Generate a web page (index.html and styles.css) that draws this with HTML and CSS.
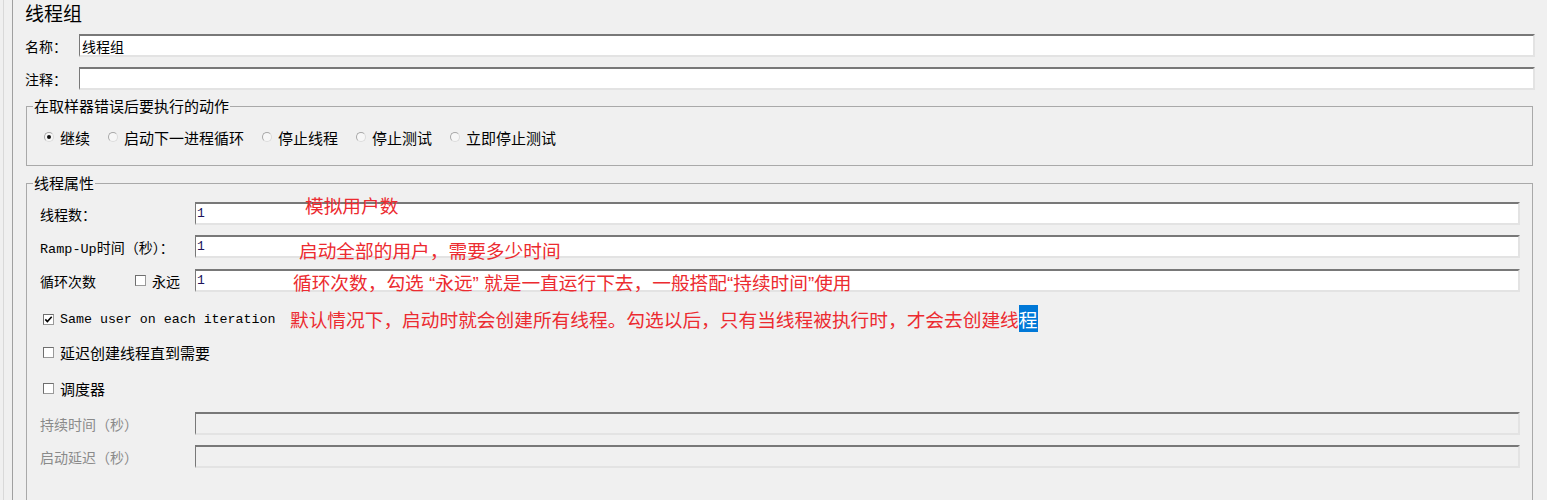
FILE: index.html
```html
<!DOCTYPE html>
<html lang="zh-CN">
<head>
<meta charset="utf-8">
<title>线程组</title>
<link rel="stylesheet" href="styles.css">
</head>
<body>
<div class="window">
  <div class="outer-line">
    <div class="pane">
      <h1 class="title">线程组</h1>
      <div class="field-row">
        <label class="field-label">名称：</label>
        <input class="text-input" value="线程组" readonly>
      </div>
      <div class="field-row row-comment">
        <label class="field-label">注释：</label>
        <input class="text-input" value="" readonly>
      </div>

      <fieldset class="group group-action">
        <legend>在取样器错误后要执行的动作</legend>
        <div class="radio-row">
          <span class="radio-item"><span class="radio checked"></span>继续</span>
          <span class="radio-item"><span class="radio"></span>启动下一进程循环</span>
          <span class="radio-item"><span class="radio"></span>停止线程</span>
          <span class="radio-item"><span class="radio"></span>停止测试</span>
          <span class="radio-item"><span class="radio"></span>立即停止测试</span>
        </div>
      </fieldset>

      <fieldset class="group group-thread">
        <legend>线程属性</legend>
        <div class="prop-row">
          <span class="prop-label">线程数：</span>
          <input class="text-input num-input" value="1" readonly>
          <span class="note note-1">模拟用户数</span>
        </div>
        <div class="prop-row row-2">
          <span class="prop-label"><span class="mono">Ramp-Up</span>时间（秒）：</span>
          <input class="text-input num-input" value="1" readonly>
          <span class="note note-2">启动全部的用户，需要多少时间</span>
        </div>
        <div class="prop-row row-3">
          <span class="prop-label loop-label"><span class="loop-text">循环次数</span><span class="checkbox"></span><span class="forever">永远</span></span>
          <input class="text-input num-input" value="1" readonly>
          <span class="note note-3">循环次数，勾选<span class="latin"> “</span>永远<span class="latin">” </span>就是一直运行下去，一般搭配<span class="latin">“</span>持续时间<span class="latin">”</span>使用</span>
        </div>

        <div class="check-row check-first">
          <span class="checkbox checked"><svg viewBox="0 0 9 9" width="9" height="9"><path d="M1.3 4.4 L3.4 6.6 L7.7 1.8" fill="none" stroke="#000" stroke-width="1.6"/></svg></span>
          <span class="mono mono-check">Same user on each iteration</span>
          <span class="note note-4">默认情况下，启动时就会创建所有线程。勾选以后，只有当线程被执行时，才会去创建线<span class="selected">程</span></span>
        </div>
        <div class="check-row check-second">
          <span class="checkbox"></span>
          <span>延迟创建线程直到需要</span>
        </div>
        <div class="check-row check-third">
          <span class="checkbox"></span>
          <span>调度器</span>
        </div>

        <div class="prop-row row-duration disabled">
          <span class="prop-label">持续时间（秒）</span>
          <input class="text-input num-input" value="" readonly>
        </div>
        <div class="prop-row row-delay disabled">
          <span class="prop-label">启动延迟（秒）</span>
          <input class="text-input num-input" value="" readonly>
        </div>
      </fieldset>
    </div>
  </div>
</div>
</body>
</html>
```

FILE: styles.css
```css
html, body {
  margin: 0;
  padding: 0;
}

body {
  background: #f0f0f0;
  font-family: "Noto Sans CJK SC", "Liberation Sans", sans-serif;
  color: #000;
}

.window {
  height: 500px;
  overflow: hidden;
  padding-left: 3px;
}

.outer-line {
  height: 100%;
  border-left: 1px solid #d9d9d9;
  padding-left: 8px;
}

.pane {
  height: 100%;
  border-left: 1px solid #a0a0a0;
  padding: 0 12px;
}

.title {
  margin: 0;
  font-size: 19px;
  font-weight: normal;
  line-height: 26px;
}

.field-row {
  display: flex;
  align-items: center;
  height: 23px;
  margin-top: 8px;
}

.row-comment {
  margin-top: 10px;
}

.field-label {
  width: 54px;
  font-size: 14px;
  flex: none;
}

.text-input {
  flex: 1;
  min-width: 0;
  height: 23px;
  box-sizing: border-box;
  margin: 0;
  padding: 0 2px;
  border-style: solid;
  border-width: 2px 2px 2px 1px;
  border-color: #787878 #e3e3e3 #e3e3e3 #787878;
  background: #fff;
  font-family: "Noto Sans CJK SC", sans-serif;
  font-size: 14px;
  color: #000;
  outline: none;
}

.num-input {
  font-family: "Liberation Mono", monospace;
  font-size: 13px;
  color: #20145a;
  padding: 0 1px;
}

.group {
  margin: 7px 2px 0 1px;
  border: 1px solid #a9a9a9;
  min-width: 0;
}

.group legend {
  padding: 0 1px;
  font-size: 15px;
  line-height: 18px;
}

.group-action {
  padding: 13px 12px 19px 6px;
}

.group-thread {
  margin-top: 8px;
  padding: 10px 12px 60px 6px;
  position: relative;
}

.radio-row {
  display: flex;
  align-items: center;
  height: 18px;
  margin-left: 11px;
  font-size: 15px;
}

.radio-item {
  display: inline-flex;
  align-items: center;
  gap: 6px;
  margin-right: 18px;
}

.radio {
  width: 10px;
  height: 10px;
  box-sizing: border-box;
  border-radius: 50%;
  border: 1px solid #a8a8a8;
  border-bottom-color: #dcdcdc;
  border-right-color: #dcdcdc;
  background: #f7f7f7;
  position: relative;
}

.radio.checked::after {
  content: "";
  position: absolute;
  left: 2px;
  top: 2px;
  width: 4px;
  height: 4px;
  border-radius: 50%;
  background: #111;
}

.prop-row {
  display: flex;
  align-items: center;
  height: 23px;
  margin-left: 7px;
  position: relative;
}

.row-2 {
  margin-top: 10px;
}

.row-3 {
  margin-top: 11px;
}

.prop-label {
  width: 155px;
  flex: none;
  font-size: 14px;
  white-space: nowrap;
}

.mono {
  font-family: "Liberation Mono", monospace;
  font-size: 13.5px;
}

.loop-label {
  display: flex;
  align-items: center;
}

.loop-text {
  width: 95px;
}

.forever {
  margin-left: 6px;
}

.checkbox {
  width: 11px;
  height: 11px;
  box-sizing: border-box;
  flex: none;
  border: 1px solid #6e6e6e;
  border-right-color: #9a9a9a;
  border-bottom-color: #9a9a9a;
  background: #fff;
  display: inline-flex;
  align-items: center;
  justify-content: center;
}

.checkbox svg {
  display: block;
}

.check-row {
  display: flex;
  align-items: center;
  gap: 6px;
  height: 20px;
  margin-left: 10px;
  font-size: 15px;
  position: relative;
}

.check-first {
  margin-top: 17px;
}

.check-second {
  margin-top: 13px;
}

.check-third {
  margin-top: 16px;
}

.mono-check {
  font-size: 13.3px;
}

.row-duration {
  margin-top: 14px;
}

.row-delay {
  margin-top: 10px;
}

.disabled .prop-label {
  color: #8a8a8a;
}

.disabled .text-input {
  background: #f0f0f0;
}

.note {
  position: absolute;
  font-family: "Noto Sans CJK SC", sans-serif;
  font-size: 18.7px;
  line-height: 21px;
  color: #ec2b30;
  white-space: nowrap;
}

.latin {
  font-family: "Liberation Sans", sans-serif;
}

.note-1 {
  left: 265px;
  top: -8px;
}

.note-2 {
  left: 259px;
  top: 4px;
}

.note-3 {
  left: 253px;
  top: 2px;
}

.note-4 {
  left: 247px;
  top: -1px;
}

.selected {
  background: #0078d7;
  color: #fff;
}
```
